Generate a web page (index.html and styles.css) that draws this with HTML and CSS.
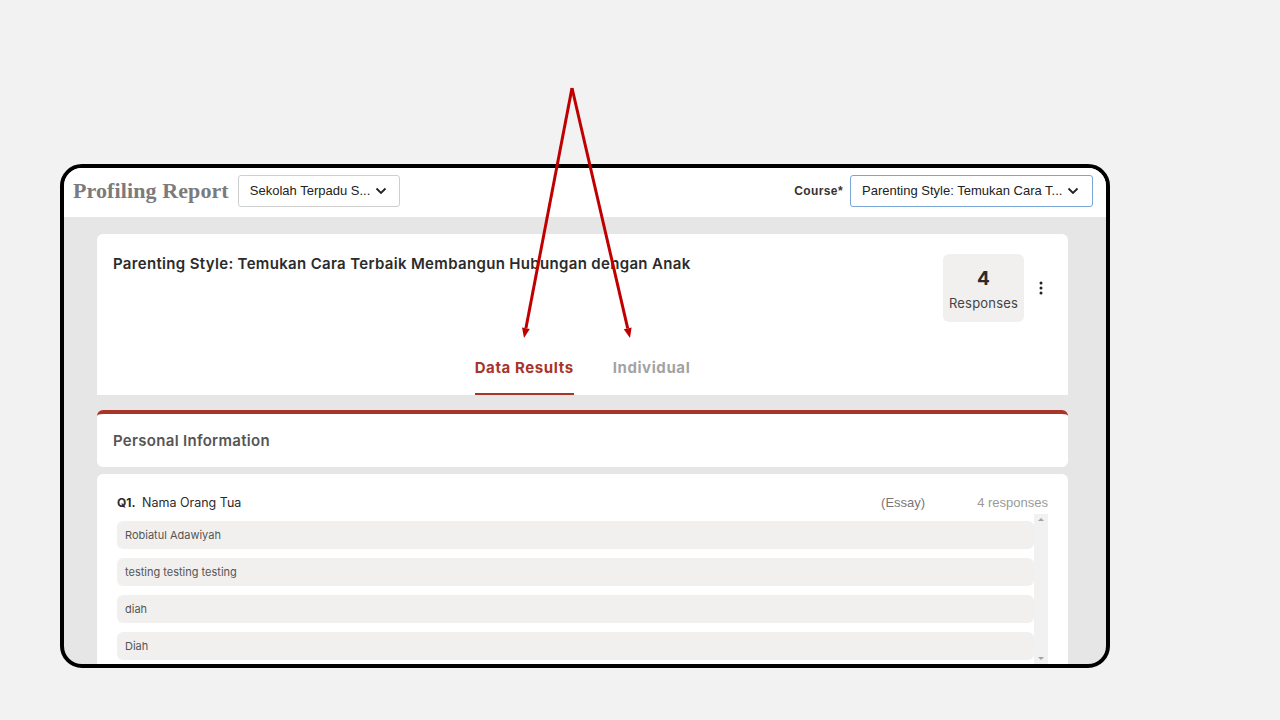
FILE: index.html
```html
<!DOCTYPE html>
<html>
<head>
<meta charset="utf-8">
<link rel="stylesheet" href="styles.css">
</head>
<body>
<div class="slide">
  <div class="frame">
    <header class="topbar">
      <div class="topbar-left">
        <h1 class="app-title">Profiling Report</h1>
        <div class="select select-school">
          <span class="select-text">Sekolah Terpadu S...</span>
          <svg class="chev" width="12" height="8" viewBox="0 0 12 8"><path d="M1.5 1.5 L6 6 L10.5 1.5" fill="none" stroke="#222" stroke-width="1.8"/></svg>
        </div>
      </div>
      <div class="topbar-right">
        <span class="course-label">Course*</span>
        <div class="select select-course">
          <span class="select-text">Parenting Style: Temukan Cara T...</span>
          <svg class="chev" width="12" height="8" viewBox="0 0 12 8"><path d="M1.5 1.5 L6 6 L10.5 1.5" fill="none" stroke="#222" stroke-width="1.8"/></svg>
        </div>
      </div>
    </header>
    <main class="content">
      <section class="card card-head">
        <div class="head-row">
          <h2 class="course-title">Parenting Style: Temukan Cara Terbaik Membangun Hubungan dengan Anak</h2>
          <div class="head-right">
            <div class="resp-box">
              <div class="resp-num">4</div>
              <div class="resp-label">Responses</div>
            </div>
            <svg class="kebab" width="4" height="14" viewBox="0 0 4 14"><circle cx="2" cy="2" r="1.5" fill="#222"/><circle cx="2" cy="7" r="1.5" fill="#222"/><circle cx="2" cy="12" r="1.5" fill="#222"/></svg>
          </div>
        </div>
        <nav class="tabs">
          <span class="tab active">Data Results</span>
          <span class="tab">Individual</span>
        </nav>
      </section>
      <section class="card card-section">
        <h3 class="section-title">Personal Information</h3>
      </section>
      <section class="card card-question">
        <div class="q-row">
          <div class="q-left"><span class="q-num">Q1.</span><span class="q-text">Nama Orang Tua</span></div>
          <div class="q-right"><span class="q-type">(Essay)</span><span class="q-count">4 responses</span></div>
        </div>
        <div class="answers">
          <div class="answer-list">
            <div class="answer">Robiatul Adawiyah</div>
            <div class="answer">testing testing testing</div>
            <div class="answer">diah</div>
            <div class="answer">Diah</div>
          </div>
          <div class="scrollbar">
            <span class="sb-arrow up"></span>
            <span class="sb-arrow down"></span>
          </div>
        </div>
      </section>
    </main>
  </div>
  <svg class="arrows" width="1280" height="720" viewBox="0 0 1280 720">
    <line x1="572" y1="88" x2="525.9" y2="328.2" stroke="#c00000" stroke-width="3"/>
    <polygon points="524,338 529.8,328.9 522.0,327.4" fill="#c00000"/>
    <line x1="572" y1="88" x2="627.7" y2="328.3" stroke="#c00000" stroke-width="3"/>
    <polygon points="630,338 631.6,327.4 623.8,329.2" fill="#c00000"/>
  </svg>
</div>
</body>
</html>
```
FILE: styles.css
```css
* { box-sizing: border-box; margin: 0; padding: 0; }
html, body { width: 1280px; height: 720px; overflow: hidden; }
body { background: #f2f2f2; font-family: Inter, "Liberation Sans", sans-serif; }
.slide { position: relative; width: 1280px; height: 720px; padding: 164px 0 0 60px; }
.frame {
  width: 1050px; height: 504px;
  border: 4px solid #000; border-radius: 22px;
  overflow: hidden; background: #e6e6e6;
  display: flex; flex-direction: column;
}
.topbar {
  height: 49px; flex: none; background: #fff;
  display: flex; align-items: center; justify-content: space-between;
  padding: 0 13px 4px 9px;
}
.topbar-left, .topbar-right { display: flex; align-items: center; }
.app-title {
  font-family: "Liberation Serif", serif; font-weight: 700; font-size: 22px;
  color: #7b7b7b; margin-right: 9px; letter-spacing: 0.1px;
}
.select {
  height: 32px; border: 1px solid #cfcfcf; border-radius: 3px; background: #fff;
  display: flex; align-items: center; justify-content: space-between;
  font-family: "Liberation Sans", Arial, sans-serif; font-size: 13px; color: #222;
}
.select-school { width: 162px; padding: 0 12px 0 11px; }
.select-course { width: 243px; padding: 0 13px 0 11px; border-color: #79a6d6; }
.chev { display: block; }
.course-label {
  font-family: "Liberation Sans", Arial, sans-serif; font-weight: 700; font-size: 12px;
  color: #333; margin-right: 7px; letter-spacing: 0.4px;
}
.content { flex: 1; padding: 17px 38px 0 33px; display: flex; flex-direction: column; }
.card { background: #fff; border-radius: 6px; }
.card-head { padding: 20px 0 0 16px; border-radius: 6px 6px 0 0; }
.head-row { display: flex; justify-content: space-between; align-items: flex-start; }
.course-title { font-size: 15px; font-weight: 600; color: #2b2b2b; line-height: 20px; letter-spacing: 0.33px; }
.head-right { display: flex; align-items: center; padding-right: 25px; }
.resp-box {
  width: 81px; height: 68px; background: #f1f0ef; border-radius: 6px; margin-right: -1px;
  display: flex; flex-direction: column; align-items: center; justify-content: center;
  padding-top: 3px;
}
.resp-num { font-size: 19px; font-weight: 700; color: #2b2b2b; line-height: 24px; }
.resp-label { font-size: 13px; color: #444; line-height: 18px; margin-top: 3px; letter-spacing: 0.2px; }
.kebab { margin-left: 16px; }
.tabs { display: flex; justify-content: center; gap: 39px; margin-top: 34px; padding-right: 16px; }
.tab { font-size: 15px; font-weight: 700; color: #a3a3a3; line-height: 24px; padding-bottom: 13px; border-bottom: 2px solid transparent; letter-spacing: 0.6px; }
.tab.active { color: #a8342a; border-bottom-color: #a8342a; }
.card-section { margin-top: 15px; height: 57px; border-top: 4px solid #a8342a; padding: 0 16px; display: flex; align-items: center; }
.section-title { font-size: 15px; font-weight: 600; color: #555; letter-spacing: 0.3px; }
.card-question { margin-top: 7px; padding: 20px 20px 0 20px; flex: 1; border-radius: 6px 6px 0 0; }
.q-row { display: flex; justify-content: space-between; align-items: center; height: 16px; }
.q-left { display: flex; align-items: center; }
.q-num { font-size: 12px; font-weight: 700; color: #2b2b2b; width: 25px; }
.q-text { font-size: 12.5px; color: #2b2b2b; }
.q-right { display: flex; align-items: center; gap: 50px; font-family: "Liberation Sans", Arial, sans-serif; font-size: 13px; padding-right: 0; }
.q-type { color: #777; margin-right: 2px; }
.q-count { color: #9a9a9a; }
.answers { display: flex; margin-top: 4px; }
.answer-list { flex: 1; display: flex; flex-direction: column; gap: 9px; padding-top: 7px; }
.answer {
  height: 28px; flex: none; background: #f1f0ef; border-radius: 6px;
  display: flex; align-items: center; padding-left: 8px;
  font-size: 11px; color: #555;
}
.scrollbar {
  width: 14px; background: #f1f1f1; height: 152px; flex: none;
  display: flex; flex-direction: column; justify-content: space-between; align-items: center;
  padding: 4px 0;
}
.sb-arrow { width: 0; height: 0; border-left: 3px solid transparent; border-right: 3px solid transparent; }
.sb-arrow.up { border-bottom: 3px solid #a3a3a3; }
.sb-arrow.down { border-top: 3px solid #a3a3a3; margin-bottom: 2px; }
.arrows { position: absolute; top: 0; left: 0; pointer-events: none; }
```
